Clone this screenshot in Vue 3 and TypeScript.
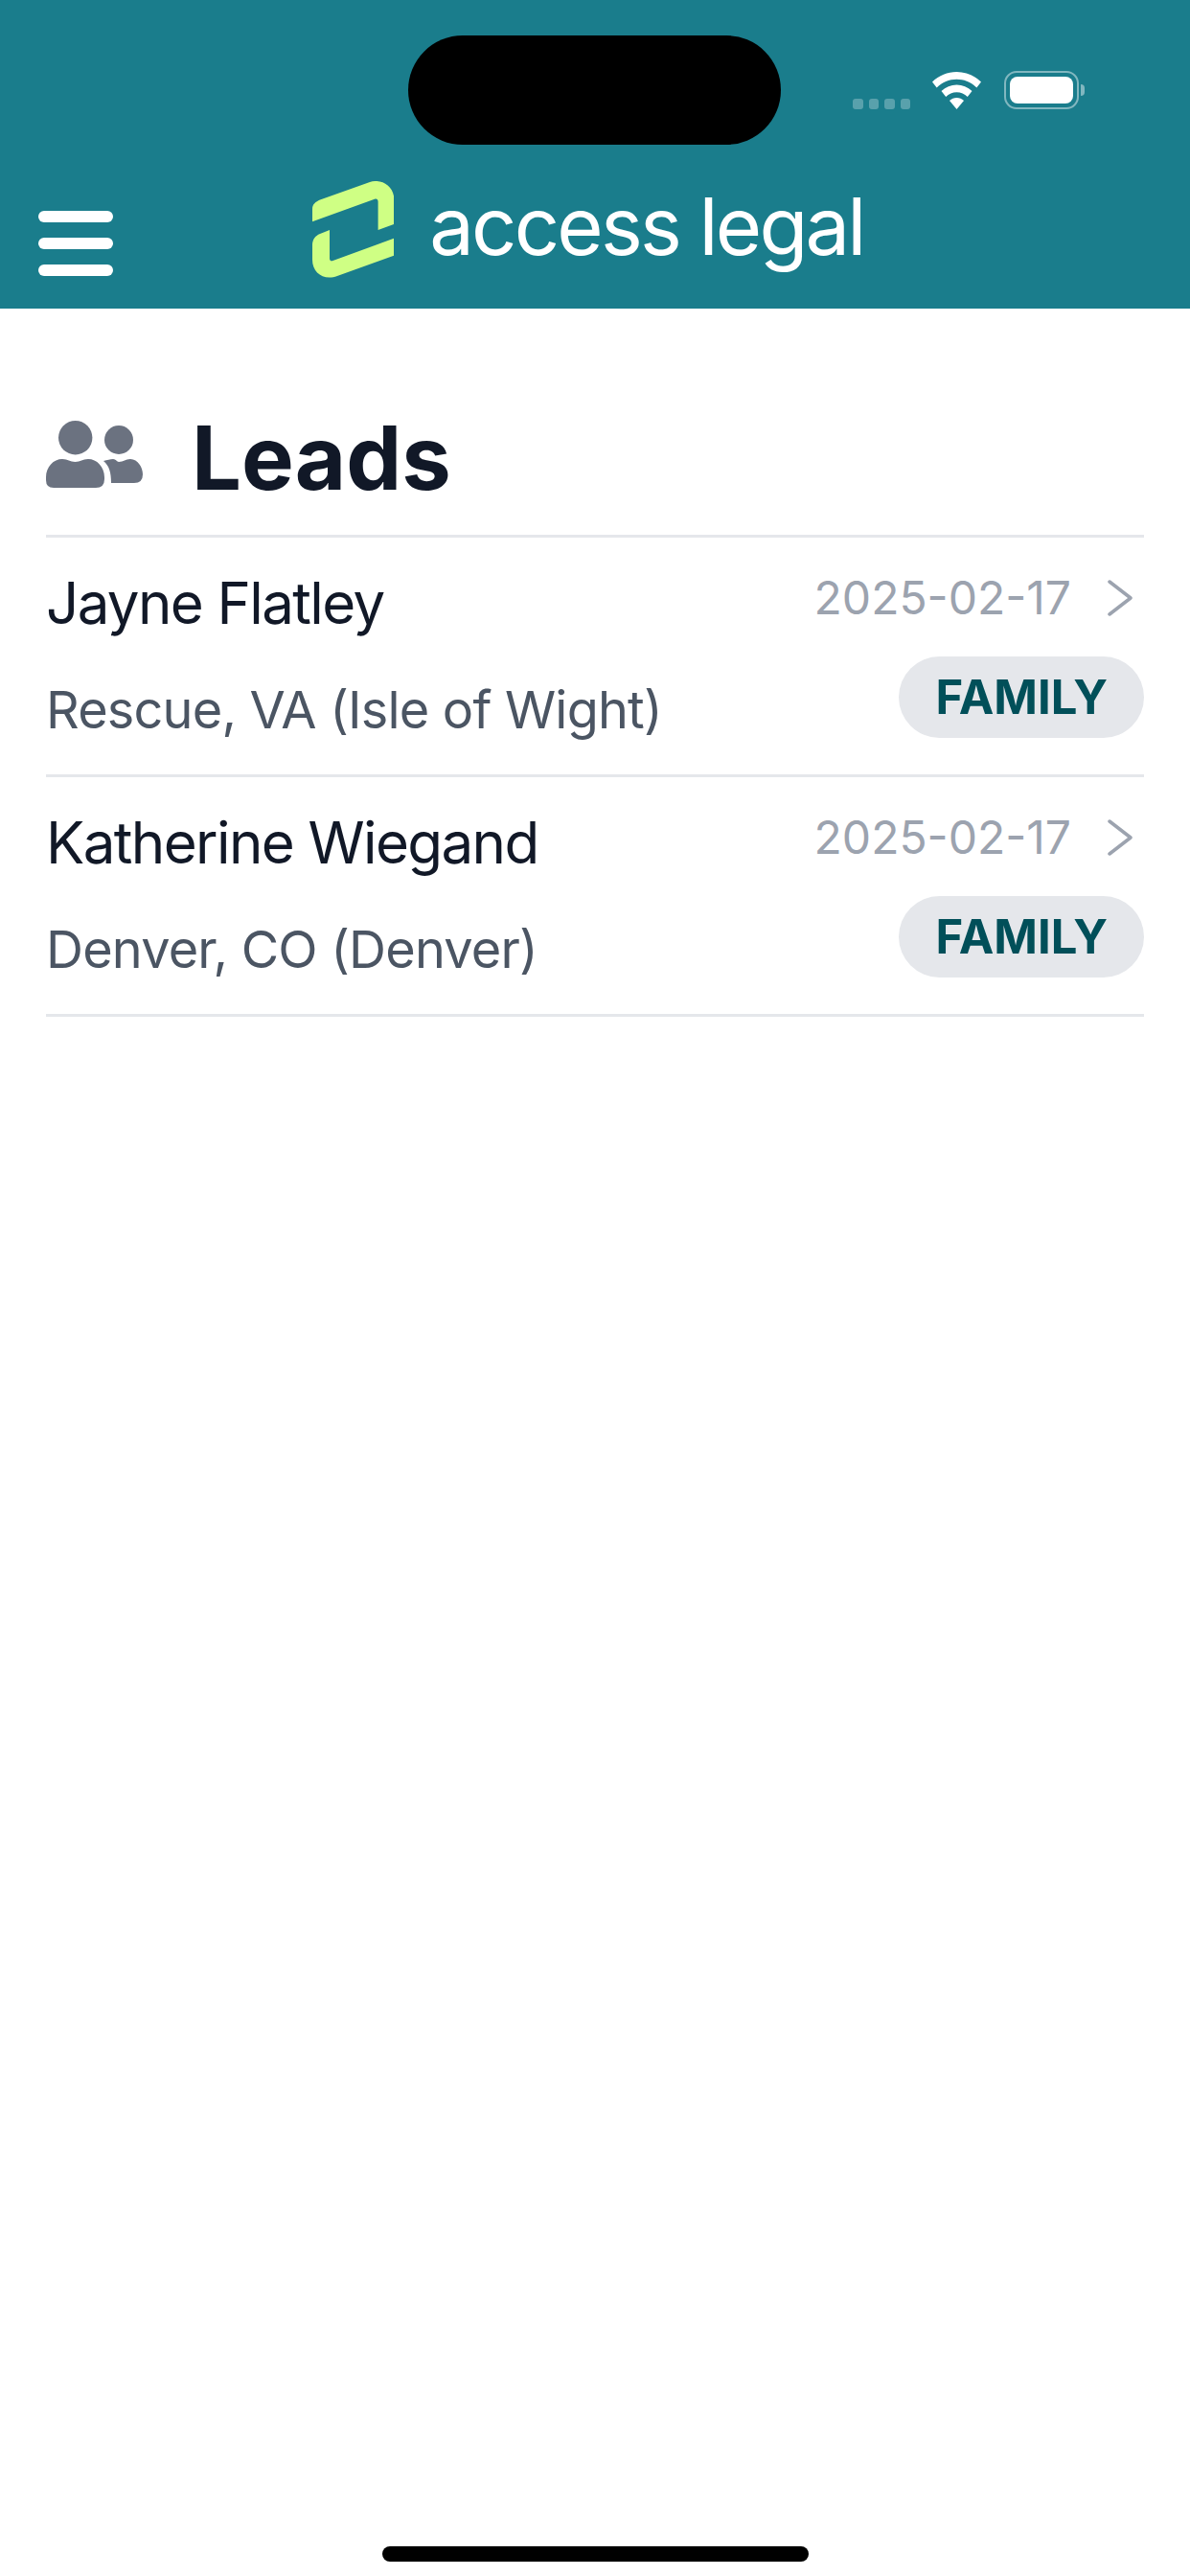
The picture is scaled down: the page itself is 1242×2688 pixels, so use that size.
<script setup lang="ts">
interface Lead {
  name: string
  place: string
  date: string
  tag: string
}

const leads: Lead[] = [
  { name: 'Jayne Flatley', place: 'Rescue, VA (Isle of Wight)', date: '2025-02-17', tag: 'FAMILY' },
  { name: 'Katherine Wiegand', place: 'Denver, CO (Denver)', date: '2025-02-17', tag: 'FAMILY' },
]
</script>

<template>
  <div class="screen">
    <header class="header">
      <div class="island"></div>
      <div class="status">
        <div class="signal">
          <span v-for="n in 4" :key="n" class="dot"></span>
        </div>
        <svg class="wifi" viewBox="0 0 51 39" width="51" height="39">
          <path fill="#fff" d="M25.5 0C35 0 44 3.800 51 10.500L46.300 16.500C40.800 11 33.500 7.800 25.500 7.800C17.500 7.800 10.200 11 4.700 16.500L0 10.500C7 3.800 16 0 25.500 0Z" />
          <path fill="#fff" d="M25.500 13.500C31.500 13.500 37 15.900 41.500 20L36.800 26C33.700 23 29.800 21.300 25.500 21.300C21.200 21.300 17.300 23 14.200 26L9.500 20C14 15.900 19.500 13.500 25.500 13.500Z" />
          <path fill="#fff" d="M25.500 27C28.300 27 30.800 28 33 30L25.500 39L18 30C20.200 28 22.700 27 25.500 27Z" />
        </svg>
        <div class="battery">
          <div class="battery-shell"><div class="battery-fill"></div></div>
          <div class="battery-cap"></div>
        </div>
      </div>
      <div class="nav">
        <button class="menu" type="button" aria-label="Menu">
          <span></span><span></span><span></span>
        </button>
        <div class="brand">
          <svg class="mark" viewBox="0 0 85.300 101" width="85.300" height="101">
            <path fill="#cfff84" d="M0 42.300V29C0 24 3.500 21.500 8 19.500L60 1C72 -3 85.300 5 85.300 19V45L68.600 51V21.500C68.600 19 67 18 65 18.800Z" />
            <path fill="#cfff84" d="M18 51L8 55C3 57 0 61 0 67V82C0 96 12 104 26 99L85.300 77.700V59.700L21.500 83C19.500 83.800 18 83 18 80.500Z" />
          </svg>
          <span class="wordmark">access legal</span>
        </div>
      </div>
    </header>

    <main class="content">
      <div class="title-row">
        <svg class="people" viewBox="0 0 101 71" width="101" height="71">
          <circle cx="30.700" cy="18.700" r="17.700" fill="#6b7280" />
          <circle cx="76" cy="21" r="15" fill="#6b7280" />
          <path fill="#6b7280" d="M8 71H52Q61 71 61 62V60C61 49 53 41 44 41C38 41 36 44 30.500 44C25 44 23 41 17 41C8 41 0 49 0 60V63Q0 71 8 71Z" />
          <path fill="#6b7280" d="M60 43C64 42 67 41 70 41C73 41 74 44 76 44C81 44 83 41 88 41C96 41 101 50 101 57Q101 66 92 66H68C68 55 66 48 60 43Z" />
        </svg>
        <h1 class="title">Leads</h1>
      </div>

      <ul class="list">
        <li v-for="lead in leads" :key="lead.name" class="row">
          <div class="who">
            <div class="name">{{ lead.name }}</div>
            <div class="place">{{ lead.place }}</div>
          </div>
          <div class="meta">
            <div class="date-line">
              <span class="date">{{ lead.date }}</span>
              <svg class="chevron" viewBox="0 0 26 38" width="26" height="38">
                <path d="M2 2L24 19L2 36" fill="none" stroke="#9ca3af" stroke-width="3.500" stroke-linecap="round" stroke-linejoin="round" />
              </svg>
            </div>
            <span class="tag">{{ lead.tag }}</span>
          </div>
        </li>
      </ul>
    </main>

    <div class="home-bar"><span></span></div>
  </div>
</template>

<style>
html,
body {
  margin: 0;
  background: #fff;
}
</style>

<style scoped>
.screen {
  width: 1242px;
  height: 2688px;
  display: flex;
  flex-direction: column;
  background: #fff;
  font-family: Inter, "Liberation Sans", sans-serif;
}

.header {
  position: relative;
  box-sizing: border-box;
  height: 322px;
  background: #1a7d8c;
}

.island {
  position: absolute;
  left: 426px;
  top: 37px;
  width: 389px;
  height: 114px;
  border-radius: 57px;
  background: #000;
}

.status {
  box-sizing: border-box;
  height: 180px;
  padding: 74px 110px 0 0;
  display: flex;
  justify-content: flex-end;
  align-items: flex-start;
}

.signal {
  display: flex;
  gap: 6px;
  margin-top: 29px;
  margin-right: 23px;
}

.dot {
  width: 10.500px;
  height: 11px;
  border-radius: 3px;
  background: rgba(255, 255, 255, 0.28);
}

.wifi {
  display: block;
  margin-top: 1px;
  margin-right: 24px;
}

.battery {
  display: flex;
  align-items: center;
  gap: 2px;
  height: 40px;
}

.battery-shell {
  box-sizing: border-box;
  width: 78px;
  height: 40px;
  padding: 4px;
  border: 2.500px solid rgba(255, 255, 255, 0.45);
  border-radius: 13px;
}

.battery-fill {
  width: 100%;
  height: 100%;
  border-radius: 8px;
  background: #fff;
}

.battery-cap {
  width: 4px;
  height: 12px;
  border-radius: 0 6px 6px 0;
  background: rgba(255, 255, 255, 0.45);
}

.nav {
  position: relative;
  display: flex;
  align-items: flex-start;
}

.menu {
  display: flex;
  flex-direction: column;
  gap: 16px;
  width: 78px;
  margin: 40px 0 0 40px;
  padding: 0;
  border: 0;
  background: none;
}

.menu span {
  display: block;
  width: 78px;
  height: 12px;
  border-radius: 6px;
  background: #fff;
}

.brand {
  display: flex;
  align-items: flex-start;
  margin: 9px 0 0 208px;
}

.mark {
  display: block;
}

.wordmark {
  margin: -1px 0 0 37px;
  color: #fff;
  font-size: 83px;
  line-height: 96px;
  font-weight: 400;
  letter-spacing: -2.800px;
  white-space: nowrap;
}

.content {
  flex: 1;
  padding: 0 48px;
}

.title-row {
  display: flex;
  align-items: flex-end;
  gap: 51px;
  height: 236px;
  box-sizing: border-box;
  padding-bottom: 34px;
}

.people {
  display: block;
  flex: none;
  margin-bottom: 15px;
}

.title {
  margin: 0;
  color: #111827;
  font-size: 92px;
  line-height: 92px;
  font-weight: 700;
}

.list {
  margin: 0;
  padding: 0;
  list-style: none;
  border-top: 3px solid #e5e7eb;
}

.row {
  box-sizing: border-box;
  height: 250px;
  display: flex;
  justify-content: space-between;
  border-bottom: 3px solid #e5e7eb;
}

.who {
  display: flex;
  flex-direction: column;
  padding-top: 33px;
}

.name {
  color: #111827;
  font-size: 60px;
  line-height: 70px;
  letter-spacing: -1.600px;
}

.place {
  margin-top: 42px;
  color: #4b5563;
  font-size: 54px;
  line-height: 70px;
  letter-spacing: -0.800px;
}

.meta {
  display: flex;
  flex-direction: column;
  align-items: flex-end;
  padding-top: 38px;
}

.date-line {
  display: flex;
  align-items: center;
  height: 50px;
}

.date {
  color: #9ca3af;
  font-size: 48px;
  line-height: 50px;
}

.chevron {
  display: block;
  margin: 0 12px 0 38px;
}

.tag {
  margin-top: 36px;
  box-sizing: border-box;
  height: 85px;
  padding: 0 38px;
  border-radius: 42.500px;
  background: #e5e7eb;
  color: #014f59;
  font-size: 49px;
  line-height: 85px;
  font-weight: 700;
}

.home-bar {
  display: flex;
  justify-content: center;
  padding-bottom: 15px;
}

.home-bar span {
  display: block;
  width: 445px;
  height: 16px;
  border-radius: 8px;
  background: #000;
}
</style>
